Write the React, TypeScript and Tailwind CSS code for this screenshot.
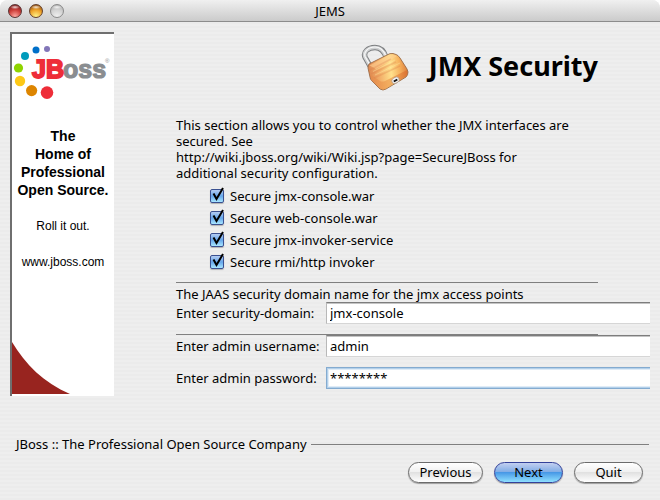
import React, { useState } from 'react';
import clsx from 'clsx';

interface SecurityOption {
  id: string;
  label: string;
}

interface TextFieldProps {
  id: string;
  label: string;
  value: string;
  active?: boolean;
  onChange: (value: string) => void;
}

const securityOptions: SecurityOption[] = [
  { id: "jmx-console", label: "Secure jmx-console.war" },
  { id: "web-console", label: "Secure web-console.war" },
  { id: "jmx-invoker", label: "Secure jmx-invoker-service" },
  { id: "http-invoker", label: "Secure rmi/http invoker" }
];

const logoDots = [
  { cx: 35, cy: 15, r: 3, fill: "#8276b8" },
  { cx: 24, cy: 16, r: 3.5, fill: "#0070c9" },
  { cx: 13, cy: 22, r: 4, fill: "#009bbb" },
  { cx: 6.5, cy: 34, r: 4.6, fill: "#8fd400" },
  { cx: 8, cy: 47, r: 5.2, fill: "#fdc816" },
  { cx: 19.6, cy: 56.6, r: 5.6, fill: "#dd8500" },
  { cx: 35, cy: 58.6, r: 6.3, fill: "#ee2d38" }
];

const TitleBar: React.FC = () => (
  <header className="relative flex h-[22px] items-center justify-center rounded-t-lg border-b border-[#8c8c8c] bg-gradient-to-b from-[#f0f0f0] to-[#cbcbcb]">
    <div className="absolute left-2 flex gap-[7px]">
      <button aria-label="Close" className="size-[14px] rounded-full border border-[#5a3434] bg-[radial-gradient(ellipse_5px_2px_at_50%_18%,#ffffffd0,transparent),radial-gradient(circle_at_50%_95%,#ffaaa2,#cf413c_50%,#641010)]"></button>
      <button aria-label="Minimize" className="size-[14px] rounded-full border border-[#64402a] bg-[radial-gradient(ellipse_5px_2px_at_50%_18%,#ffffffd0,transparent),radial-gradient(circle_at_50%_95%,#fff58a,#f0a52b_50%,#7a3808)]"></button>
      <button aria-label="Zoom" className="size-[14px] rounded-full border border-[#8a8a8a] bg-[radial-gradient(ellipse_5px_2px_at_50%_18%,#ffffffd0,transparent),radial-gradient(circle_at_50%_95%,#f0f0f0,#d4d4d4_50%,#a9a9a9)]"></button>
    </div>
    <h1>JEMS</h1>
  </header>
);

const Banner: React.FC = () => (
  <aside className="flex h-[364px] w-[104px] shrink-0 flex-col border-t-2 border-l-2 border-[#6f6f6f] bg-white pb-[2px] font-['Liberation_Sans',Arial,sans-serif]">
    <svg viewBox="0 0 102 72" className="h-[72px] w-full" role="img" aria-label="JBoss">
      {logoDots.map((dot) => (
        <circle key={dot.fill} {...dot} />
      ))}
      <text x="51" y="44" fontSize="25" fontWeight="bold" fill="#8a8d90" stroke="#8a8d90" strokeWidth="1.2">oss</text>
      <text x="20" y="44" fontSize="25" fontWeight="bold" fill="#ee2d38" stroke="#ee2d38" strokeWidth="1.8">JB</text>
      <text x="93" y="29" fontSize="6" fill="#8a8d90">®</text>
    </svg>
    <div className="mt-[21px] text-center leading-[18px]">
      <p className="text-sm leading-[18px] font-bold text-black">
        The<br />Home of<br />Professional<br />Open Source.
      </p>
      <p className="mt-[18px] text-xs leading-[18px]">Roll it out.</p>
      <p className="mt-[18px] text-xs leading-[18px]">www.jboss.com</p>
    </div>
    <svg viewBox="0 0 58 52" className="mt-auto h-[52px] w-[58px]" aria-hidden="true">
      <path d="M0 0 C13 22 32 41 58 52 H0 Z" fill="#98241f" />
    </svg>
  </aside>
);

const Padlock: React.FC = () => (
  <svg viewBox="0 0 48 48" className="size-12" aria-hidden="true">
    <defs>
      <linearGradient id="brass" x1="0" y1="0.6" x2="1" y2="0.5">
        <stop offset="0" stopColor="#dd8650" />
        <stop offset="0.3" stopColor="#f3b069" />
        <stop offset="0.58" stopColor="#ffe08c" />
        <stop offset="0.8" stopColor="#f6b25e" />
        <stop offset="1" stopColor="#dd7f3c" />
      </linearGradient>
      <linearGradient id="brass-front" x1="0" y1="0.5" x2="1" y2="0.5">
        <stop offset="0" stopColor="#e48a4b" />
        <stop offset="0.5" stopColor="#ee9a4c" />
        <stop offset="1" stopColor="#d8692b" />
      </linearGradient>
    </defs>
    {/* shackle */}
    <path d="M9 22 L4 13 C2 8 7 3.5 14 3.5 C20 3.5 23 7 25 13" fill="none" stroke="#7b7d7f" strokeWidth="5.4" />
    <path d="M9 22 L4 13 C2 8 7 3.5 14 3.5 C20 3.5 23 7 25 13" fill="none" stroke="#cfd1d2" strokeWidth="3.6" />
    <path d="M9 21 L4 12.5 C2.5 8 7 3 14 3 C20 3 23 7 25 12" fill="none" stroke="#f8f8f8" strokeWidth="1.2" />
    {/* body */}
    <path d="M8 20 Q7 22 7 24 L9 33 Q9 35 11 37 L19 45 Q22 47 25 45 L45 33 Q47 31 47 28 L46 25 L39 14 Q37 11 35 10.5 L32 9.5 Q29 9 26 11 Z" fill="url(#brass)" stroke="#9b6a45" strokeWidth="0.9" />
    <path d="M19 37 Q21 38 24 37 L46 26 Q47 29 45.5 32 L25 44.5 Q22 46.5 19.5 44.5 L10 36 L9 30 Z" fill="url(#brass-front)" opacity="0.65" />
    <path d="M8.5 21.5 L26.5 12 Q30 10 33 11 L36 12 L15 25 Z" fill="#ffd193" opacity="0.6" />
    <path d="M9 26 L30 15 M10 30 L35 18 M13 34 L39 22" fill="none" stroke="#d97d48" strokeWidth="1.6" opacity="0.3" />
    <path d="M12 27.5 L34 16 M14 31 L39 19" fill="none" stroke="#fff0b0" strokeWidth="0.9" opacity="0.4" />
    <ellipse cx="34.5" cy="36.3" rx="4" ry="2.9" fill="#f4f4f4" stroke="#a08870" strokeWidth="0.6" transform="rotate(-32 34.5 36.3)" />
    <path d="M32.8 37.5 L36.3 35.5" stroke="#111" strokeWidth="2" />
  </svg>
);

const CheckRow: React.FC<{ option: SecurityOption }> = ({ option }) => (
  <div className="flex h-[22px] items-center gap-[6px]">
    <span className="relative size-[14px]">
      <input
        id={option.id}
        type="checkbox"
        defaultChecked
        className="peer block size-[14px] appearance-none rounded-[2px] border border-[#4c5a78] bg-gradient-to-b from-white to-[#e4e4e4] shadow-[0_1px_1px_#00000040] checked:border-[#3a5090] checked:from-[#b4ccf2] checked:via-[#65a6ea] checked:to-[#a9e6ff]"
      />
      <svg viewBox="0 0 14 16" className="pointer-events-none absolute -top-[2px] left-0 hidden h-4 w-[14px] peer-checked:block" aria-hidden="true">
        <path d="M3.5 6.5 L6.5 12 L13 1" fill="none" stroke="#000" strokeWidth="2" />
      </svg>
    </span>
    <label htmlFor={option.id}>{option.label}</label>
  </div>
);

const TextField: React.FC<TextFieldProps> = ({ id, label, value, active, onChange }) => (
  <div className="flex items-center">
    <label htmlFor={id} className="w-[150px] shrink-0">{label}</label>
    <input
      id={id}
      type="text"
      value={value}
      onChange={(e) => onChange(e.target.value)}
      className={clsx(
        "h-[22px] min-w-0 flex-1 bg-white outline-none",
        active
          ? "border border-r-0 border-[#84abd0] pl-[3px] shadow-[inset_1px_1px_0_#b3d0ea,inset_0_-1px_0_#b3d0ea,inset_2px_2px_0_#e0ecf7,inset_0_-2px_0_#e0ecf7]"
          : "border border-r-0 border-t-[#7d7d7d] border-b-[#d6d6d6] border-l-[#b8b8b8] pl-[3px] shadow-[inset_0_1px_0_#c4c4c4]"
      )}
    />
  </div>
);

const AquaButton: React.FC<{ label: string; primary?: boolean; wide?: boolean }> = ({ label, primary, wide }) => (
  <button
    className={clsx(
      "h-[21px] rounded-full border pb-px shadow-[0_1px_1px_#00000055]",
      wide ? "w-[75px]" : "w-[69px]",
      primary
        ? "border-[#34429a] bg-[linear-gradient(#c3cff0,#83aee6_45%,#4798e6_50%,#8fe0ff)]"
        : "border-[#6c6c6c] bg-[linear-gradient(#ffffff,#f1f1f1_45%,#e1e1e1_50%,#ffffff)]"
    )}
  >
    {label}
  </button>
);

const App: React.FC = () => {
  const [domain, setDomain] = useState("jmx-console");
  const [username, setUsername] = useState("admin");
  const [password, setPassword] = useState("********");

  return (
    <div className="min-h-screen bg-white font-['Noto_Sans',sans-serif] text-[13px] leading-4 text-black">
      <div className="flex min-h-screen flex-col rounded-t-lg bg-[repeating-linear-gradient(#eeeeee_0px,#eeeeee_2px,#ebebeb_2px,#ebebeb_4px)]">
        <TitleBar />

        <div className="flex gap-[62px] px-[10px] pt-[10px]">
          <Banner />

          <main className="min-w-0 flex-1">
            <div className="mr-[52px]">
              <div className="flex items-center justify-end gap-5 pt-3">
                <Padlock />
                <h2 className="pb-1 text-[27px] leading-8 font-bold">JMX Security</h2>
              </div>
              <p className="mt-[25px] max-w-[400px]">
                This section allows you to control whether the JMX interfaces are secured. See{" "}
                <span className="whitespace-nowrap">http://wiki.jboss.org/wiki/Wiki.jsp?page=SecureJBoss</span>{" "}
                for additional security configuration.
              </p>
              <div className="mt-1 pl-[34px]">
                {securityOptions.map((option) => (
                  <CheckRow key={option.id} option={option} />
                ))}
              </div>
              <hr className="mt-[9px] border-[#808080]" />
              <p className="mt-[3px]">The JAAS security domain name for the jmx access points</p>
            </div>

            <form>
              <TextField id="domain" label="Enter security-domain:" value={domain} onChange={setDomain} />
              <hr className="mt-[10px] mr-[52px] border-[#808080]" />
              <TextField id="username" label="Enter admin username:" value={username} onChange={setUsername} />
              <div className="mt-[10px]">
                <TextField id="password" label="Enter admin password:" value={password} onChange={setPassword} active />
              </div>
            </form>
          </main>
        </div>

        <footer className="mt-10 pr-[11px] pl-4">
          <div className="flex items-center gap-1">
            <span>JBoss :: The Professional Open Source Company</span>
            <hr className="flex-1 border-[#808080]" />
          </div>
          <div className="mt-[10px] flex justify-end gap-[11px] pr-[6px]">
            <AquaButton label="Previous" wide />
            <AquaButton label="Next" primary />
            <AquaButton label="Quit" />
          </div>
        </footer>
      </div>
    </div>
  );
};

export default App;
